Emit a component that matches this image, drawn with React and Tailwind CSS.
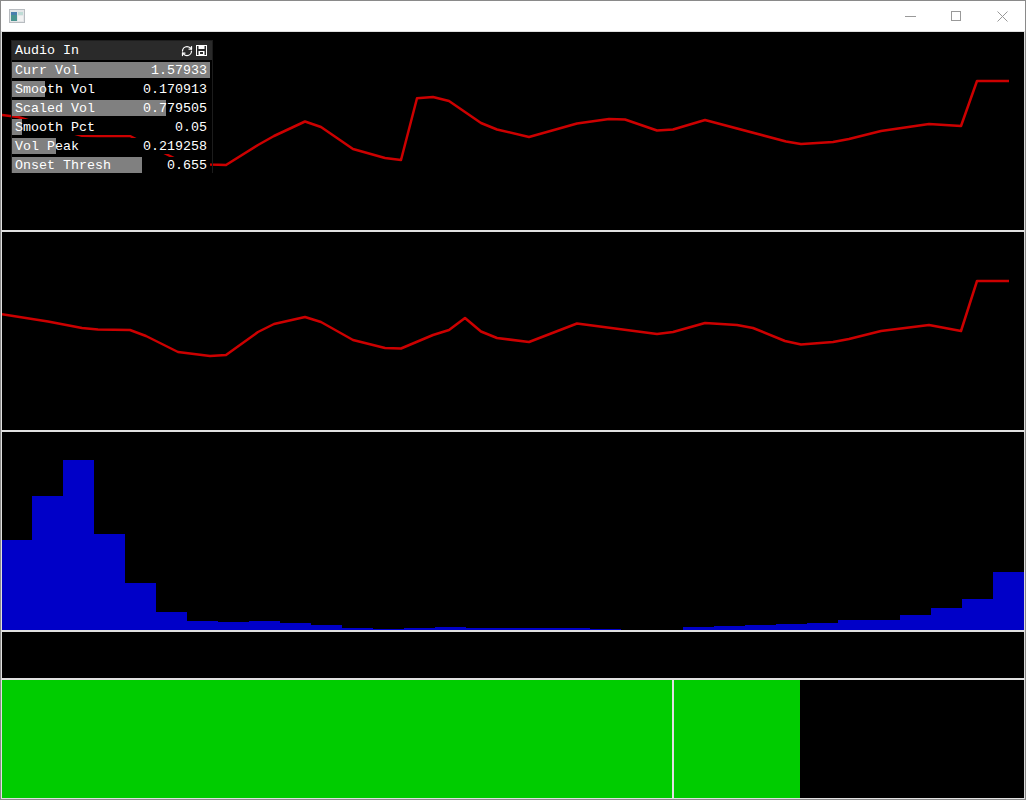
import React from "react";
import { RefreshCw } from "lucide-react";

const LINE1 = "2,115 18,117 34,122 50,127 82,135.8 98,136 130,136 146,144 162,152 178,160 210,164.5 226,165 258,145 274,136 305,121.5 321,127 353,149 385,158 401,160 417,98.3 433,97 449,101 481,123 497,129.5 529,137 577,123.5 609,119 625,119.5 657,130.5 673,129.5 705,120 786,141.5 801,144 833,142 849,139 881,131 929,124 961,126 977,81 1009,81";
const LINE2 = "2,314.3 48,321.5 82,328 98,329.5 130,330 146,336 178,352 210,356 226,355 258,332 274,324 305,317 321,322 353,340 385,348 401,348.5 433,335 449,330 465,318 481,331.5 497,338 529,342 577,323.5 657,334 673,332 705,323 737,325 753,328 785,341 801,344.5 833,342 849,339 881,331 929,325 961,331 977,281 1009,281";
const BARS = [540,496,460,534,583,612,621,622,621,623,625,628,629,628,627,628,628,628,628,629,630,630,627,626,625,624,623,620,620,615,608,599,572];
const ROWS = [
  ["Curr Vol", "1.57933", 198],
  ["Smooth Vol", "0.170913", 33],
  ["Scaled Vol", "0.779505", 154],
  ["Smooth Pct", "0.05", 10],
  ["Vol Peak", "0.219258", 44],
  ["Onset Thresh", "0.655", 130],
];

function LinePlot({ points, top }) {
  return (
    <svg className="block w-[1022px] h-[198px]" viewBox={`2 ${top} 1022 198`}>
      <polyline points={points} fill="none" stroke="#cc0000" strokeWidth="2.5" strokeLinejoin="round" />
    </svg>
  );
}

function Panel() {
  return (
    <div className="absolute left-[9px] top-[8px] w-[202px] font-['Liberation_Mono',monospace] text-[13.33px] leading-4 text-white">
      <div className="h-[20px] flex items-center justify-between pl-[3px] pr-[5px] bg-[#2a2a2a] border-x border-t border-[#1c1c1c]">
        <span>Audio In</span>
        <span className="flex items-center gap-[3px]">
          <RefreshCw size={12} strokeWidth={2.5} color="#ffffff" />
          <svg width="11" height="11" viewBox="0 0 11 11">
            <rect x="0.5" y="0.5" width="10" height="10" fill="#2a2a2a" stroke="#fff" />
            <rect x="2.5" y="1" width="6" height="3" fill="#fff" />
            <rect x="2.5" y="6" width="6" height="4" fill="#fff" />
            <rect x="4" y="7" width="3" height="2" fill="#2a2a2a" />
          </svg>
        </span>
      </div>
      <div className="flex flex-col gap-[3px] pt-[2px] pr-[2px] border-x border-[#1c1c1c]">
        {ROWS.map(([label, value, w]) => (
          <div key={label} className="relative h-[16px] bg-black">
            <div className="absolute inset-y-0 left-0 bg-[#808080]" style={{ width: w }} />
            <div className="relative flex justify-between pt-[1px] pl-[3px] pr-[3px]">
              <span>{label}</span>
              <span>{value}</span>
            </div>
          </div>
        ))}
      </div>
    </div>
  );
}

export default function App() {
  return (
    <div className="w-[1026px] h-[800px] flex flex-col bg-white overflow-hidden border border-[#8a8a8a]">
      <div className="h-[30px] shrink-0 flex items-center justify-between bg-white">
        <svg className="ml-[8px]" width="16" height="14" viewBox="0 0 16 14">
          <rect x="0.5" y="0.5" width="15" height="13" fill="#e4e6e8" stroke="#b8bcc0" />
          <rect x="2" y="3" width="6" height="9" fill="#4a9490" />
          <rect x="2" y="3" width="6" height="3" fill="#4a7fae" />
          <rect x="9" y="3" width="5" height="3" fill="#bfdcd6" />
          <rect x="9" y="7" width="5" height="5" fill="#f2f2f2" />
        </svg>
        <div className="flex items-center gap-[35px] mr-[17px]">
          <svg width="11" height="11" viewBox="0 0 11 11"><path d="M0 5.5H11" stroke="#999" /></svg>
          <svg width="11" height="11" viewBox="0 0 11 11"><rect x="0.5" y="0.5" width="9" height="9" fill="none" stroke="#999" /></svg>
          <svg width="11" height="11" viewBox="0 0 11 11"><path d="M0.5 0.5L10.5 10.5M10.5 0.5L0.5 10.5" stroke="#999" /></svg>
        </div>
      </div>
      <div className="flex-1 flex flex-col bg-black border-t border-x border-[#e0e0e0]">
        <div className="relative h-[200px] shrink-0 border-b-2 border-[#e0e0e0]">
          <LinePlot points={LINE1} top={32} />
          <Panel />
        </div>
        <div className="h-[200px] shrink-0 border-b-2 border-[#e0e0e0]">
          <LinePlot points={LINE2} top={232} />
        </div>
        <div className="h-[200px] shrink-0 border-b-2 border-[#e0e0e0]">
          <svg className="block w-[1022px] h-[198px]" viewBox="2 432 1022 198" shapeRendering="crispEdges">
            {BARS.map((t, i) => (
              <rect key={i} x={1 + i * 31} y={t} width={31} height={630 - t} fill="#0000c8" />
            ))}
          </svg>
        </div>
        <div className="h-[48px] shrink-0 border-b-2 border-[#e0e0e0]" />
        <div className="flex-1 flex border-b border-[#e0e0e0]">
          <div className="w-[670px] bg-[#00cc00]" />
          <div className="w-[2px] bg-[#e0e0e0]" />
          <div className="w-[126px] bg-[#00cc00]" />
          <div className="flex-1 bg-black" />
        </div>
      </div>
    </div>
  );
}
